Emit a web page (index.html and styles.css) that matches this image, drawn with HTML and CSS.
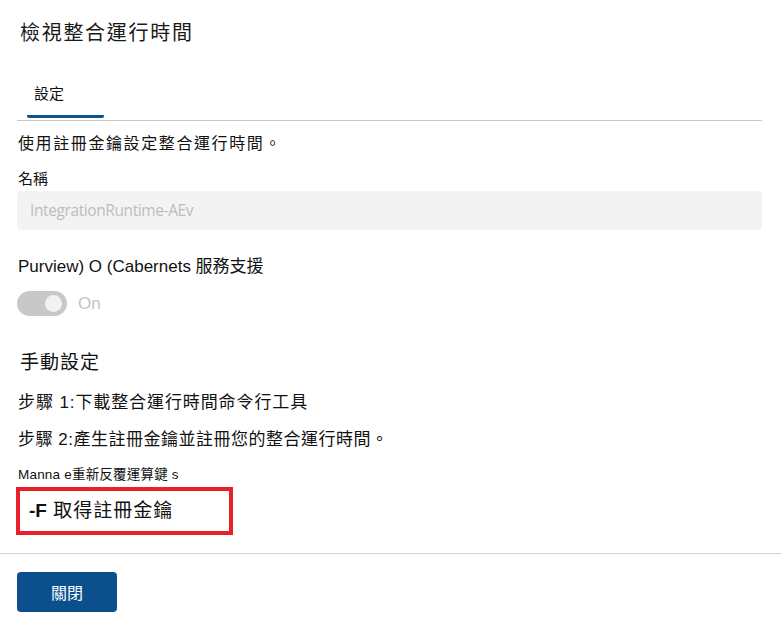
FILE: index.html
```html
<!DOCTYPE html>
<html lang="zh-Hant">
<head>
<meta charset="utf-8">
<link rel="stylesheet" href="styles.css">
</head>
<body>
<div class="panel">
  <div class="content">
    <h1 class="title">檢視整合運行時間</h1>
    <div class="tabs">
      <div class="tab">設定</div>
    </div>
    <p class="desc">使用註冊金鑰設定整合運行時間。</p>
    <label class="label">名稱</label>
    <div class="input">IntegrationRuntime-AEv</div>
    <p class="purview">Purview) O (Cabernets 服務支援</p>
    <div class="toggle-row">
      <span class="toggle"><span class="knob"></span></span>
      <span class="toggle-text">On</span>
    </div>
    <h2 class="section">手動設定</h2>
    <p class="step step1">步驟 1:下載整合運行時間命令行工具</p>
    <p class="step step2">步驟 2:產生註冊金鑰並註冊您的整合運行時間。</p>
    <p class="small">Manna e重新反覆運算鍵 s</p>
    <div class="highlight"><b>-F</b> 取得註冊金鑰</div>
  </div>
  <div class="footer">
    <button class="btn">關閉</button>
  </div>
</div>
</body>
</html>
```
FILE: styles.css
```css
* { box-sizing: border-box; }
html, body { margin: 0; padding: 0; background: #fff; }
body {
  font-family: "Liberation Sans", "Noto Sans CJK TC", sans-serif;
  color: #111;
}
.content {
  padding: 21px 19px 0 17px;
  display: flex;
  flex-direction: column;
  align-items: flex-start;
}
.title {
  margin: 0 0 0 3px;
  font-weight: 400;
  font-size: 20px;
  line-height: 24px;
  letter-spacing: 1.7px;
  color: #1a1a1a;
}
.tabs {
  align-self: stretch;
  margin-top: 39px;
  border-bottom: 1px solid #c8c8c8;
  display: flex;
}
.tab {
  margin-left: 10px;
  width: 77px;
  padding: 0 0 11px 7px;
  font-size: 15px;
  line-height: 20px;
  border-bottom: 3px solid #0f548c;
  margin-bottom: 2px;
  border-radius: 2px;
}
.desc {
  margin: 12px 0 0 1px;
  font-size: 16px;
  line-height: 22px;
  letter-spacing: 1.6px;
}
.label {
  margin: 14px 0 0 1px;
  font-size: 15px;
  line-height: 20px;
  display: block;
}
.input {
  align-self: stretch;
  margin-top: 2px;
  height: 39px;
  background: #f3f3f3;
  border-radius: 4px;
  padding-left: 13px;
  font-family: "Open Sans", sans-serif;
  font-size: 15.5px;
  letter-spacing: -0.4px;
  line-height: 39px;
  color: #bdbdbd;
}
.purview {
  margin: 26px 0 0 1px;
  font-size: 17px;
  line-height: 22px;
}
.toggle-row {
  margin-top: 13px;
  display: flex;
  align-items: center;
  height: 25px;
}
.toggle {
  width: 50px;
  height: 25px;
  border-radius: 13px;
  background: #c8c8c8;
  position: relative;
  display: inline-block;
}
.knob {
  position: absolute;
  right: 5px;
  top: 4px;
  width: 17px;
  height: 17px;
  border-radius: 50%;
  background: #f2f2f2;
}
.toggle-text {
  margin-left: 11px;
  font-size: 17px;
  color: #c3c3c3;
}
.section {
  margin: 35px 0 0 3px;
  font-weight: 400;
  font-size: 19px;
  line-height: 24px;
  letter-spacing: 1px;
}
.step {
  margin: 0 0 0 1px;
  font-size: 17px;
  line-height: 22px;
  letter-spacing: 0.5px;
}
.step1 { margin-top: 17px; letter-spacing: 0.9px; }
.step2 { margin-top: 15px; }
.small {
  margin: 16px 0 0 1px;
  font-size: 13.5px;
  line-height: 16px;
  letter-spacing: 0.2px;
}
.highlight {
  margin: 4px 0 0 -1px;
  width: 217px;
  height: 48px;
  border: 4px solid #e8202a;
  padding-left: 9px;
  font-size: 19px;
  line-height: 40px;
  letter-spacing: 1px;
}
.highlight b { font-weight: 700; letter-spacing: 0; }
.footer {
  margin-top: 18px;
  border-top: 1px solid #d4d4d4;
  padding: 18px 17px 0;
}
.btn {
  width: 100px;
  height: 40px;
  border: none;
  border-radius: 4px;
  background: #0b4f8c;
  color: #fff;
  font-family: "Noto Sans CJK TC", sans-serif;
  font-size: 16px;
  padding: 0;
}
```
